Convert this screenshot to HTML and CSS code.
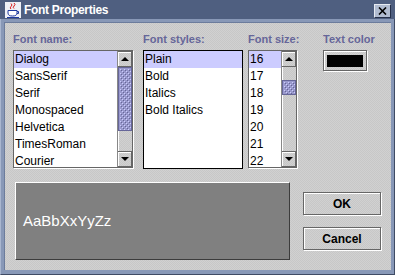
FILE: index.html
```html
<!DOCTYPE html>
<html>
<head>
<meta charset="utf-8">
<link rel="stylesheet" href="styles.css">
</head>
<body>
<div class="window">
  <div class="titlebar">
    <svg class="app-icon" width="16" height="16" viewBox="0 0 16 16">
      <rect x="0" y="0" width="16" height="16" fill="#eef0f6"/>
      <path d="M6 1.5 q2 1.5 0 3 q-1.5 1.5 0 2.5 M9 1 q2 1.5 0 3 q-1.5 1.5 0 2.5" stroke="#d81818" stroke-width="1" fill="none"/>
      <path d="M3 8.5 h9 v2.5 q0 3 -4.5 3 q-4.5 0 -4.5 -3 z" fill="#ffffff" stroke="#1f3aa0" stroke-width="1"/>
      <path d="M12 9.5 h1.5 v2 h-1.5" stroke="#1f3aa0" fill="none"/>
      <path d="M2 15.5 h12" stroke="#1f3aa0" stroke-width="1"/>
    </svg>
    <span class="title">Font Properties</span>
    <div class="close">
      <svg width="9" height="8" viewBox="0 0 9 8"><path d="M1 0.5 L8 7.5 M8 0.5 L1 7.5" stroke="#000" stroke-width="1.6"/></svg>
    </div>
  </div>
  <div class="content">
    <div class="top">
      <div class="col col-name">
        <div class="label">Font name:</div>
        <div class="pane">
          <div class="list">
            <div class="row sel">Dialog</div>
            <div class="row">SansSerif</div>
            <div class="row">Serif</div>
            <div class="row">Monospaced</div>
            <div class="row">Helvetica</div>
            <div class="row">TimesRoman</div>
            <div class="row">Courier</div>
          </div>
          <div class="sb">
            <div class="arrow up"><span class="tri-up"></span></div>
            <div class="track">
              <div class="thumb thumb-name">
                <svg width="100%" height="100%"><defs><pattern id="bumps1" width="4" height="4" patternUnits="userSpaceOnUse"><rect x="0" y="0" width="1" height="1" fill="#ccccff"/><rect x="2" y="2" width="1" height="1" fill="#ccccff"/><rect x="1" y="1" width="1" height="1" fill="#666699"/><rect x="3" y="3" width="1" height="1" fill="#666699"/></pattern></defs><rect width="100%" height="100%" fill="url(#bumps1)"/></svg>
              </div>
            </div>
            <div class="arrow down"><span class="tri-down"></span></div>
          </div>
        </div>
      </div>
      <div class="col col-styles">
        <div class="label">Font styles:</div>
        <div class="pane pane-styles">
          <div class="list">
            <div class="row sel">Plain</div>
            <div class="row">Bold</div>
            <div class="row">Italics</div>
            <div class="row">Bold Italics</div>
          </div>
        </div>
      </div>
      <div class="col col-size">
        <div class="label">Font size:</div>
        <div class="pane">
          <div class="list">
            <div class="row sel">16</div>
            <div class="row">17</div>
            <div class="row">18</div>
            <div class="row">19</div>
            <div class="row">20</div>
            <div class="row">21</div>
            <div class="row">22</div>
          </div>
          <div class="sb">
            <div class="arrow up"><span class="tri-up"></span></div>
            <div class="track">
              <div class="thumb thumb-size">
                <svg width="100%" height="100%"><defs><pattern id="bumps2" width="4" height="4" patternUnits="userSpaceOnUse"><rect x="0" y="0" width="1" height="1" fill="#ccccff"/><rect x="2" y="2" width="1" height="1" fill="#ccccff"/><rect x="1" y="1" width="1" height="1" fill="#666699"/><rect x="3" y="3" width="1" height="1" fill="#666699"/></pattern></defs><rect width="100%" height="100%" fill="url(#bumps2)"/></svg>
              </div>
            </div>
            <div class="arrow down"><span class="tri-down"></span></div>
          </div>
        </div>
      </div>
      <div class="col col-color">
        <div class="label">Text color</div>
        <div class="swatch-btn"><div class="swatch"></div></div>
      </div>
    </div>
    <div class="bottom">
      <div class="preview">AaBbXxYyZz</div>
      <div class="buttons">
        <button class="btn">OK</button>
        <button class="btn">Cancel</button>
      </div>
    </div>
  </div>
</div>
</body>
</html>
```
FILE: styles.css
```css
* { box-sizing: border-box; }
body {
  margin: 0;
  background: #ffffff;
  font-family: "Liberation Sans", Arial, sans-serif;
}
.window {
  width: 395px;
  height: 275px;
  background: #8898b7;
  border-left: 1px solid #a9b6cf;
  border-right: 1px solid #3f4b64;
  border-bottom: 1px solid #3f4b64;
  display: flex;
  flex-direction: column;
}
.titlebar {
  height: 19px;
  margin: 0 -1px;
  background: #4f5f80;
  display: flex;
  align-items: flex-start;
  padding-left: 5px;
}
.app-icon {
  margin-top: 2px;
  flex: none;
}
.title {
  margin-left: 3px;
  margin-top: 3px;
  color: #ffffff;
  font-weight: bold;
  font-size: 12px;
  line-height: 14px;
  letter-spacing: -0.3px;
}
.close {
  margin-left: auto;
  margin-right: 4px;
  margin-top: 4px;
  width: 17px;
  height: 14px;
  background: #b1bcd1;
  border-top: 1px solid #e6ebf3;
  border-left: 1px solid #e6ebf3;
  border-right: 1px solid #26304a;
  border-bottom: 1px solid #26304a;
  display: flex;
  align-items: center;
  justify-content: center;
}
.content, .sb .track, .btn, .swatch-btn, .arrow {
  background-color: #cccccc;
  background-image: repeating-conic-gradient(#d1d1d1 0 25%, #c7c7c7 0 50%);
  background-size: 2px 2px;
}
.content {
  margin: 3px 3px 4px 3px;
  height: 248px;
  border-left: 1px solid #6c7c9c;
  border-top: 1px solid #6c7c9c;
}
.top {
  display: flex;
  padding: 10px 0 0 8px;
}
.col { flex: none; }
.col-name { width: 120px; margin-right: 10px; }
.col-styles { width: 100px; margin-right: 5px; }
.col-size { width: 49px; margin-right: 26px; }
.col-color { width: 60px; }
.label {
  font-size: 11px;
  font-weight: bold;
  color: #666699;
  line-height: 13px;
  height: 13px;
  margin-bottom: 4px;
  white-space: nowrap;
}
.pane {
  display: flex;
  width: 100%;
  height: 118px;
  border: 1px solid #666666;
  box-shadow: 1px 1px 0 #ffffff;
  background: #ffffff;
}
.pane-styles {
  height: 119px;
  border-color: #000000;
  box-shadow: none;
}
.list {
  flex: 1;
  overflow: hidden;
  background: #ffffff;
}
.row {
  height: 17px;
  line-height: 17px;
  font-size: 12px;
  padding-left: 1px;
  color: #000000;
  white-space: nowrap;
}
.row.sel { background: #ccccff; }
.sb {
  width: 15px;
  flex: none;
  display: flex;
  flex-direction: column;
  border-left: 1px solid #888888;
}
.arrow {
  height: 16px;
  flex: none;
  border: 1px solid #666666;
  border-left: none;
  box-shadow: inset 1px 1px 0 #ffffff;
  display: flex;
  align-items: center;
  justify-content: center;
}
.tri-up, .tri-down {
  width: 0;
  height: 0;
  border-left: 4px solid transparent;
  border-right: 4px solid transparent;
}
.tri-up { border-bottom: 4px solid #000000; }
.tri-down { border-top: 4px solid #000000; }
.track {
  flex: 1;
  box-shadow: inset 1px 0 0 #ffffff;
}
.thumb {
  background: #9999cc;
  border: 1px solid #666699;
  padding: 1px 0 0 1px;
}
.thumb svg { display: block; }
.thumb-name { height: 64px; }
.thumb-size { height: 15px; margin-top: 13px; }
.swatch-btn {
  width: 44px;
  height: 21px;
  border: 1px solid #666666;
  box-shadow: inset 1px 1px 0 #ffffff, 1px 1px 0 #ffffff;
  display: flex;
  align-items: center;
  justify-content: center;
}
.swatch {
  width: 36px;
  height: 12px;
  background: #000000;
}
.bottom {
  display: flex;
  padding: 13px 0 0 10px;
}
.preview {
  width: 275px;
  height: 78px;
  flex: none;
  background: #808080;
  border-top: 1px solid #ffffff;
  border-left: 1px solid #ffffff;
  border-right: 1px solid #3c3c3c;
  border-bottom: 1px solid #3c3c3c;
  display: flex;
  align-items: center;
  padding: 0 0 2px 7px;
  color: #ffffff;
  font-size: 15px;
}
.buttons {
  margin-left: 13px;
  padding-top: 10px;
  display: flex;
  flex-direction: column;
  gap: 12px;
}
.btn {
  width: 78px;
  height: 23px;
  margin: 0;
  padding: 0;
  border: 1px solid #666666;
  box-shadow: inset 1px 1px 0 #ffffff, 1px 1px 0 #ffffff;
  font-family: "Liberation Sans", Arial, sans-serif;
  font-weight: bold;
  font-size: 12px;
  color: #000000;
}
```
